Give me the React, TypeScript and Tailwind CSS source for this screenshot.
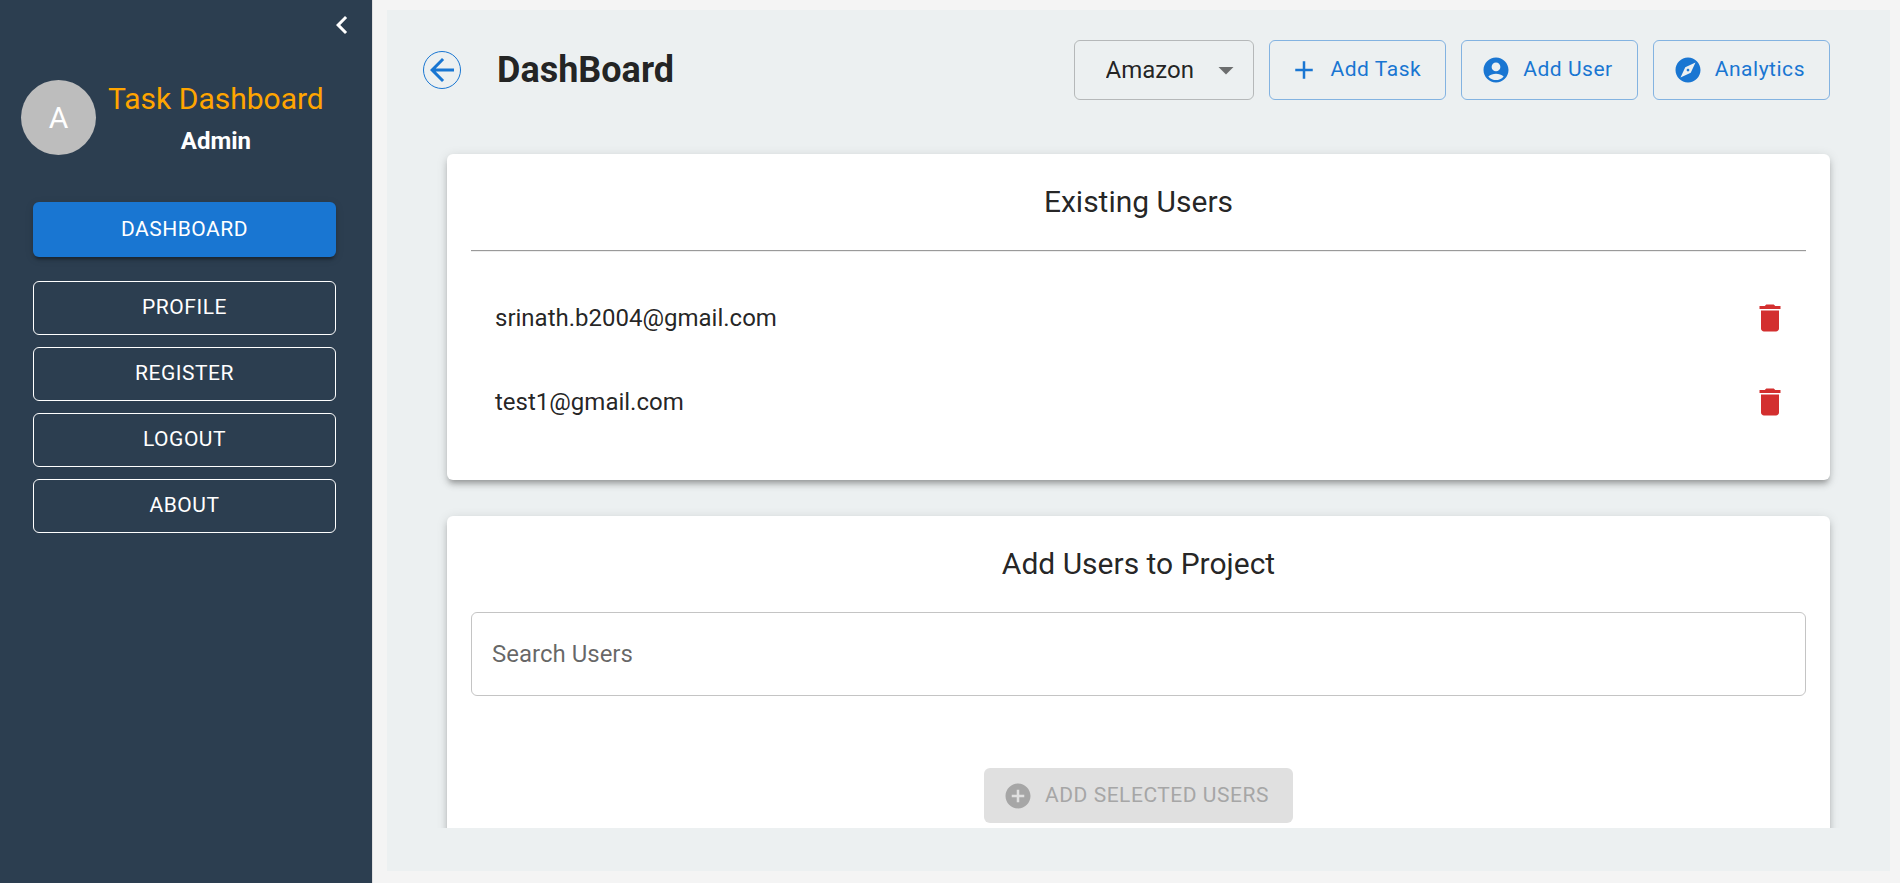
import { useState } from "react";
import type { ReactNode } from "react";

const icons = {
  chevronLeft: "M15.41 7.41 14 6l-6 6 6 6 1.41-1.41L10.83 12z",
  arrowBack: "M20 11H7.83l5.59-5.59L12 4l-8 8 8 8 1.41-1.41L7.83 13H20z",
  dropDown: "m7 10 5 5 5-5z",
  add: "M19 13h-6v6h-2v-6H5v-2h6V5h2v6h6z",
  account:
    "M12 2C6.48 2 2 6.48 2 12s4.48 10 10 10 10-4.48 10-10S17.52 2 12 2m0 4c1.93 0 3.5 1.57 3.5 3.5S13.93 13 12 13s-3.5-1.57-3.5-3.5S10.07 6 12 6m0 14c-2.03 0-4.43-.82-6.14-2.88C7.55 15.8 9.68 15 12 15s4.45.8 6.14 2.12C16.43 19.18 14.03 20 12 20",
  explore:
    "M12 10.9c-.61 0-1.1.49-1.1 1.1s.49 1.1 1.1 1.1c.61 0 1.1-.49 1.1-1.1s-.49-1.1-1.1-1.1M12 2C6.48 2 2 6.48 2 12s4.48 10 10 10 10-4.48 10-10S17.52 2 12 2m2.19 12.19L6 18l3.81-8.19L18 6z",
  trash:
    "M6 19c0 1.1.9 2 2 2h8c1.1 0 2-.9 2-2V7H6zM19 4h-3.5l-1-1h-5l-1 1H5v2h14z",
  addCircle:
    "M12 2C6.48 2 2 6.48 2 12s4.48 10 10 10 10-4.48 10-10S17.52 2 12 2m5 11h-4v4h-2v-4H7v-2h4V7h2v4h4z",
};

function Icon({ name, className }: { name: keyof typeof icons; className: string }) {
  return (
    <svg viewBox="0 0 24 24" fill="currentColor" aria-hidden="true" className={className}>
      <path d={icons[name]} />
    </svg>
  );
}

const navItems = ["PROFILE", "REGISTER", "LOGOUT", "ABOUT"];

function Sidebar() {
  return (
    <aside className="flex w-[373px] shrink-0 flex-col border-r border-[#e0e0e0] bg-[#2c3e50] text-white">
      <div className="flex justify-end px-3 pt-[7px]">
        <button type="button" aria-label="Collapse sidebar">
          <Icon name="chevronLeft" className="size-9" />
        </button>
      </div>
      <div className="mt-8 flex items-center gap-3 pl-[21px]">
        <div className="flex size-[75px] shrink-0 items-center justify-center rounded-full bg-[#bdbdbd] text-[30px]">
          A
        </div>
        <div className="flex flex-col items-center">
          <span className="text-[30px] leading-[48px] text-[#ffa500]">Task Dashboard</span>
          <span className="text-2xl leading-9 font-bold">Admin</span>
        </div>
      </div>
      <nav className="mt-[43px] flex flex-col gap-3 pr-9 pl-[33px] text-[21px]">
        <button
          type="button"
          className="mb-3 h-[55px] rounded-md bg-[#1976d2] tracking-wide shadow-[0_2px_8px_rgba(0,0,0,0.12),0_3px_3px_rgba(0,0,0,0.14),0_5px_2px_-3px_rgba(0,0,0,0.2)]"
        >
          DASHBOARD
        </button>
        {navItems.map((item) => (
          <button key={item} type="button" className="h-[54px] rounded-md border border-white tracking-wide">
            {item}
          </button>
        ))}
      </nav>
    </aside>
  );
}

function ActionButton({ icon, children }: { icon: keyof typeof icons; children: ReactNode }) {
  return (
    <button
      type="button"
      className="flex h-[60px] items-center gap-3 rounded-md border border-[#1976d2]/50 pr-6 pl-[19px] text-[21px] tracking-wide text-[#1976d2]"
    >
      <Icon name={icon} className="size-[30px]" />
      {children}
    </button>
  );
}

function Card({ title, children }: { title: string; children: ReactNode }) {
  return (
    <section className="rounded-md bg-white p-6 shadow-[0_5px_5px_-3px_rgba(0,0,0,0.2),0_5px_6px_rgba(0,0,0,0.14),0_2px_12px_rgba(0,0,0,0.12)]">
      <h2 className="mb-6 text-center text-[30px] leading-[48px]">{title}</h2>
      {children}
    </section>
  );
}

export default function App() {
  const [users, setUsers] = useState(["srinath.b2004@gmail.com", "test1@gmail.com"]);

  return (
    <div className="flex h-screen bg-[#f4f4f4] font-[Roboto,sans-serif] text-black/87">
      <Sidebar />
      <main className="mt-2.5 mr-2.5 mb-3 ml-3.5 flex min-w-0 flex-1 flex-col bg-[#ecf0f1] pt-[30px] pb-[43px]">
        <header className="flex items-center pr-[60px] pl-9">
          <button
            type="button"
            aria-label="Go back"
            className="rounded-full border border-[#1976d2] text-[#1976d2]"
          >
            <Icon name="arrowBack" className="size-9" />
          </button>
          <h1 className="ml-9 flex-1 text-4xl font-bold">DashBoard</h1>
          <div className="flex gap-[15px]">
            <div className="relative">
              <select
                aria-label="Project"
                defaultValue="Amazon"
                className="h-[60px] w-[180px] appearance-none rounded-md border border-black/23 bg-transparent pl-[31px] text-2xl"
              >
                <option>Amazon</option>
              </select>
              <Icon
                name="dropDown"
                className="pointer-events-none absolute top-3 right-2.5 size-9 text-black/54"
              />
            </div>
            <ActionButton icon="add">Add Task</ActionButton>
            <ActionButton icon="account">Add User</ActionButton>
            <ActionButton icon="explore">Analytics</ActionButton>
          </div>
        </header>
        <div className="mx-[45px] mt-[39px] flex min-h-0 flex-1 flex-col gap-9 overflow-y-auto p-[15px] [scrollbar-width:none]">
          <Card title="Existing Users">
            <hr className="border-t border-b border-t-[#9a9a9a] border-b-[#eeeeee]" />
            <ul className="mt-3 py-3">
              {users.map((email) => (
                <li key={email} className="flex h-[84px] items-center justify-between pr-[18px] pl-6 text-2xl">
                  {email}
                  <button
                    type="button"
                    aria-label={`Delete ${email}`}
                    onClick={() => setUsers(users.filter((user) => user !== email))}
                    className="text-[#d32f2f]"
                  >
                    <Icon name="trash" className="size-9" />
                  </button>
                </li>
              ))}
            </ul>
          </Card>
          <Card title="Add Users to Project">
            <input
              type="text"
              aria-label="Search Users"
              placeholder="Search Users"
              className="block h-[84px] w-full rounded-md border border-black/23 px-5 text-2xl placeholder:text-black/60"
            />
            <button
              type="button"
              disabled
              className="mx-auto mt-[72px] flex h-[55px] items-center gap-3 rounded-md bg-[#e0e0e0] pr-6 pl-[19px] text-[21px] tracking-wide text-[#a6a6a6]"
            >
              <Icon name="addCircle" className="size-[30px]" />
              ADD SELECTED USERS
            </button>
          </Card>
        </div>
      </main>
    </div>
  );
}
